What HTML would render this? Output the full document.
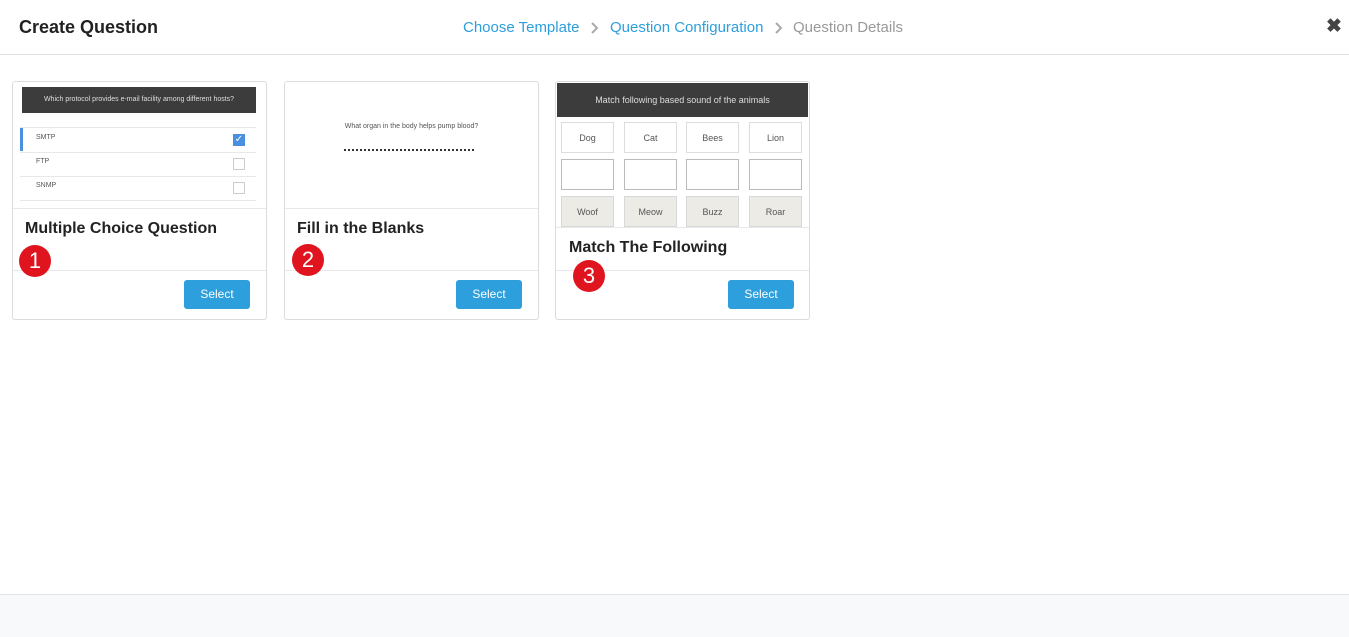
<!DOCTYPE html>
<html><head><style>
*{box-sizing:border-box;margin:0;padding:0}
body{width:1349px;height:637px;position:relative;background:#fff;font-family:"Liberation Sans",Arial,sans-serif;overflow:hidden}
.a{position:absolute}
.hdr{left:0;top:0;width:1349px;height:55px;border-bottom:1px solid #e3e3e3}
.card{border:1px solid #dcdcdc;border-radius:3px;background:#fff}
.btn{background:#2d9fdc;color:#fff;font-size:12px;text-align:center;line-height:28px;border-radius:3px;width:66px;height:29px}
.badge{width:32px;height:32px;border-radius:50%;background:#e0141e;color:#fff;font-size:22px;text-align:center;line-height:32px}
.t{font-size:16px;font-weight:bold;color:#222}
.line{height:1px;background:#e8e8e8}
.box{border:1px solid #ddd;font-size:9px;color:#555;text-align:center;width:53px;height:31px;line-height:31px}
.g{background:#edebe6;border-color:#d8d8d8}
.cb{width:12px;height:12px;border:1px solid #ccc}
</style></head><body>
<div class="a hdr"></div>
<div class="a" style="left:19px;top:17px;font-size:18px;font-weight:bold;color:#222">Create Question</div>
<div class="a" style="left:463px;top:19px;font-size:15px;color:#2d9fdc">Choose Template</div>
<svg class="a" style="left:590px;top:22px" width="9" height="12" viewBox="0 0 9 12"><path d="M2 1l5 5-5 5" stroke="#aaa" stroke-width="2" fill="none"/></svg>
<div class="a" style="left:610px;top:19px;font-size:15px;color:#2d9fdc">Question Configuration</div>
<svg class="a" style="left:774px;top:22px" width="9" height="12" viewBox="0 0 9 12"><path d="M2 1l5 5-5 5" stroke="#aaa" stroke-width="2" fill="none"/></svg>
<div class="a" style="left:793px;top:19px;font-size:15px;color:#999">Question Details</div>
<div class="a" style="left:1326px;top:15px;font-size:19px;font-weight:bold;color:#444">&#x2716;</div>

<!-- card1 -->
<div class="a card" style="left:12px;top:81px;width:255px;height:239px"></div>
<div class="a" style="left:22px;top:87px;width:234px;height:26px;background:#3c3c3c;color:#ddd;font-size:7px;text-align:center;line-height:26px">Which protocol provides e-mail facility among different hosts?</div>
<div class="a line" style="left:20px;top:127px;width:236px"></div>
<div class="a" style="left:20px;top:128px;width:3px;height:23px;background:#4a8fe0"></div>
<div class="a" style="left:36px;top:134px;font-size:7px;color:#555">SMTP</div>
<div class="a cb" style="left:233px;top:134px;background:#4a8fe0;border-color:#4a8fe0;color:#fff;font-size:10px;line-height:10px;text-align:center">&#x2713;</div>
<div class="a line" style="left:20px;top:152px;width:236px"></div>
<div class="a" style="left:36px;top:158px;font-size:7px;color:#555">FTP</div>
<div class="a cb" style="left:233px;top:158px"></div>
<div class="a line" style="left:20px;top:176px;width:236px"></div>
<div class="a" style="left:36px;top:182px;font-size:7px;color:#555">SNMP</div>
<div class="a cb" style="left:233px;top:182px"></div>
<div class="a line" style="left:20px;top:200px;width:236px"></div>
<div class="a line" style="left:13px;top:208px;width:253px"></div>
<div class="a t" style="left:25px;top:220px">Multiple Choice Question</div>
<div class="a line" style="left:13px;top:270px;width:253px"></div>
<div class="a btn" style="left:184px;top:280px">Select</div>
<div class="a badge" style="left:19px;top:245px">1</div>

<!-- card2 -->
<div class="a card" style="left:284px;top:81px;width:255px;height:239px"></div>
<div class="a" style="left:284px;top:123px;width:255px;text-align:center;font-size:7px;color:#555">What organ in the body helps pump blood?</div>
<div class="a" style="left:344px;top:149px;width:130px;border-top:2px dotted #333"></div>
<div class="a line" style="left:285px;top:208px;width:253px"></div>
<div class="a t" style="left:297px;top:220px">Fill in the Blanks</div>
<div class="a line" style="left:285px;top:270px;width:253px"></div>
<div class="a btn" style="left:456px;top:280px">Select</div>
<div class="a badge" style="left:292px;top:244px">2</div>

<!-- card3 -->
<div class="a card" style="left:555px;top:81px;width:255px;height:239px"></div>
<div class="a" style="left:557px;top:83px;width:251px;height:34px;background:#3c3c3c;color:#ddd;font-size:9px;text-align:center;line-height:34px">Match following based sound of the animals</div>
<div class="a box" style="left:561px;top:122px">Dog</div>
<div class="a box" style="left:624px;top:122px">Cat</div>
<div class="a box" style="left:686px;top:122px">Bees</div>
<div class="a box" style="left:749px;top:122px">Lion</div>
<div class="a box" style="left:561px;top:159px;border-color:#bbb"></div>
<div class="a box" style="left:624px;top:159px;border-color:#bbb"></div>
<div class="a box" style="left:686px;top:159px;border-color:#bbb"></div>
<div class="a box" style="left:749px;top:159px;border-color:#bbb"></div>
<div class="a box g" style="left:561px;top:196px">Woof</div>
<div class="a box g" style="left:624px;top:196px">Meow</div>
<div class="a box g" style="left:686px;top:196px">Buzz</div>
<div class="a box g" style="left:749px;top:196px">Roar</div>
<div class="a line" style="left:556px;top:227px;width:253px"></div>
<div class="a t" style="left:569px;top:239px">Match The Following</div>
<div class="a line" style="left:556px;top:270px;width:253px"></div>
<div class="a btn" style="left:728px;top:280px">Select</div>
<div class="a badge" style="left:573px;top:260px">3</div>

<div class="a" style="left:0;top:594px;width:1349px;height:43px;background:#f8f9fb;border-top:1px solid #e3e3e3"></div>
</body></html>
